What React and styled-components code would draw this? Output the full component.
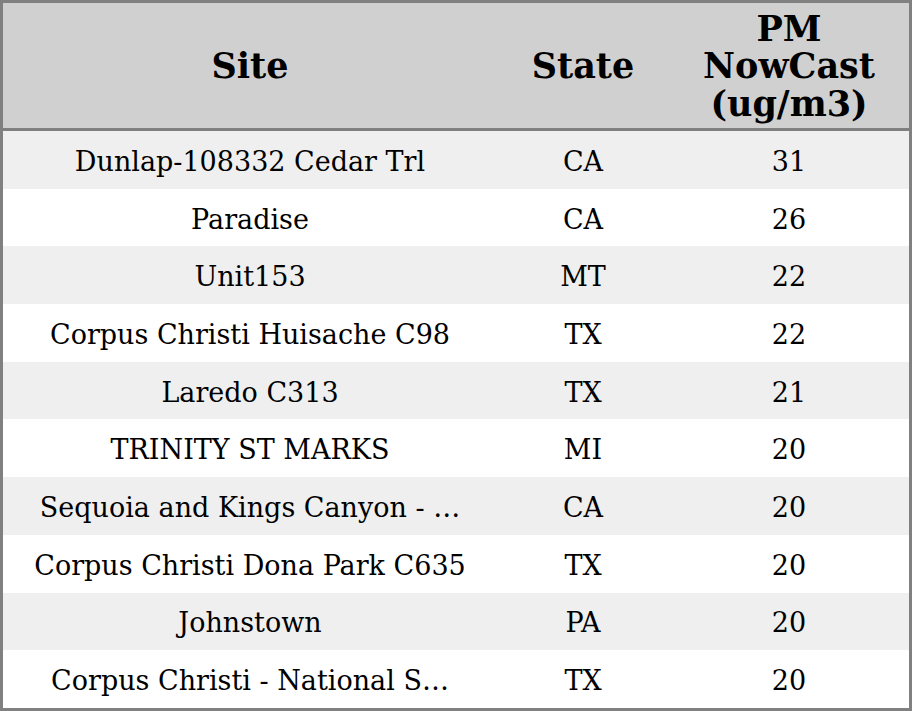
import styled, { createGlobalStyle } from 'styled-components'

const rows = [
  { site: 'Dunlap-108332 Cedar Trl', state: 'CA', pm: 31 },
  { site: 'Paradise', state: 'CA', pm: 26 },
  { site: 'Unit153', state: 'MT', pm: 22 },
  { site: 'Corpus Christi Huisache C98', state: 'TX', pm: 22 },
  { site: 'Laredo C313', state: 'TX', pm: 21 },
  { site: 'TRINITY ST MARKS', state: 'MI', pm: 20 },
  { site: 'Sequoia and Kings Canyon - …', state: 'CA', pm: 20 },
  { site: 'Corpus Christi Dona Park C635', state: 'TX', pm: 20 },
  { site: 'Johnstown', state: 'PA', pm: 20 },
  { site: 'Corpus Christi - National S…', state: 'TX', pm: 20 },
]

const GlobalStyle = createGlobalStyle`
  body {
    margin: 0;
    font-family: 'DejaVu Serif', 'Liberation Serif', serif;
    color: #000;
  }
`

const Table = styled.table`
  width: 912px;
  height: 711px;
  table-layout: fixed;
  border-collapse: separate;
  border-spacing: 0;
  border: 3px solid #808080;
  box-sizing: border-box;
`

const HeadCell = styled.th`
  height: 124px;
  padding: 1px 4px 0;
  background-color: #d0d0d0;
  border-bottom: 3px solid #808080;
  font-size: 35px;
  font-weight: bold;
  line-height: 37.5px;
  text-align: center;
`

const Row = styled.tr`
  height: 57.7px;
  background-color: ${({ $odd }) => ($odd ? '#efefef' : '#ffffff')};
`

const Cell = styled.td`
  padding: 3px 6px 0;
  font-size: 27px;
  text-align: center;
  white-space: nowrap;
  overflow: hidden;
  text-overflow: ellipsis;
`

const App = () => {
  return (
    <>
      <GlobalStyle />
      <Table>
        <colgroup>
          <col style={{ width: '494px' }} />
          <col style={{ width: '172px' }} />
          <col />
        </colgroup>
        <thead>
          <tr>
            <HeadCell>Site</HeadCell>
            <HeadCell>State</HeadCell>
            <HeadCell>
              PM
              <br />
              NowCast
              <br />
              (ug/m3)
            </HeadCell>
          </tr>
        </thead>
        <tbody>
          {rows.map((row, i) => (
            <Row key={i} $odd={i % 2 === 0}>
              <Cell>{row.site}</Cell>
              <Cell>{row.state}</Cell>
              <Cell>{row.pm}</Cell>
            </Row>
          ))}
        </tbody>
      </Table>
    </>
  )
}

export default App
